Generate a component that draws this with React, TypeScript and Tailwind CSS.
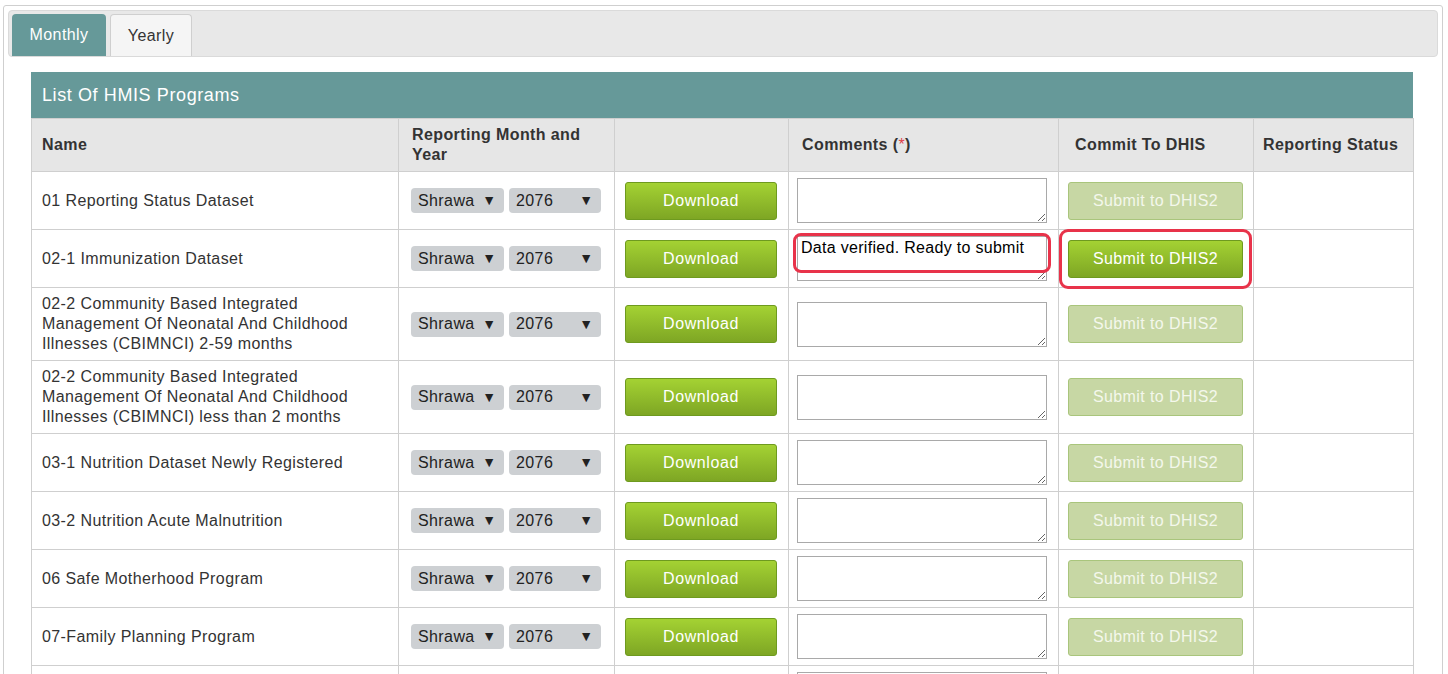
import React from 'react'

type Row = {
  name: string[]
  tall?: boolean
  highlighted?: boolean
}

const rows: Row[] = [
  { name: ['01 Reporting Status Dataset'] },
  { name: ['02-1 Immunization Dataset'], highlighted: true },
  {
    name: ['02-2 Community Based Integrated', 'Management Of Neonatal And Childhood', 'Illnesses (CBIMNCI) 2-59 months'],
    tall: true,
  },
  {
    name: ['02-2 Community Based Integrated', 'Management Of Neonatal And Childhood', 'Illnesses (CBIMNCI) less than 2 months'],
    tall: true,
  },
  { name: ['03-1 Nutrition Dataset Newly Registered'] },
  { name: ['03-2 Nutrition Acute Malnutrition'] },
  { name: ['06 Safe Motherhood Program'] },
  { name: ['07-Family Planning Program'] },
  { name: ['08 Safe Abortion Service'] },
]

function FakeSelect({ value, width }: { value: string; width: string }) {
  return (
    <div
      className={`${width} h-[25px] rounded-[4px] bg-[#cdd0d3] flex items-center justify-between pl-[7px] pr-[8px] text-[16px] text-[#222]`}
    >
      <span>{value}</span>
      <span className="text-[14px] tracking-normal">▼</span>
    </div>
  )
}

export default function App() {
  return (
    <div className="h-[674px] overflow-hidden bg-white pt-[5px] pl-[3px] pr-[5px] font-['Liberation_Sans',Arial,sans-serif] text-[16px] tracking-[0.4px] text-[#333]">
      <div className="border border-[#cfcfcf] rounded-[3px] pt-[4px] px-[4px] pb-[20px] min-h-[700px]">
        {/* Tabs */}
        <div className="h-[47px] bg-[#e8e8e8] border border-[#dadada] rounded-[4px] flex items-end pl-[3px] gap-[4px]">
          <div className="w-[94px] h-[42px] bg-[#669999] rounded-t-[4px] text-white flex items-center justify-center">
            Monthly
          </div>
          <div className="w-[82px] h-[42px] bg-[#f5f5f5] border border-[#cfcfcf] border-b-0 rounded-t-[4px] flex items-center justify-center">
            Yearly
          </div>
        </div>

        {/* Panel */}
        <div className="mt-[15px] ml-[23px] mr-[25px]">
          <div className="h-[46px] bg-[#669999] text-white text-[18px] tracking-[0.6px] flex items-center pl-[11px]">
            List Of HMIS Programs
          </div>
          <table className="w-full border-collapse table-fixed">
            <colgroup>
              <col className="w-[367px]" />
              <col className="w-[216px]" />
              <col className="w-[174px]" />
              <col className="w-[270px]" />
              <col className="w-[195px]" />
              <col className="w-[160px]" />
            </colgroup>
            <thead>
              <tr className="h-[53px] bg-[#e6e6e6] text-left">
                <th className="border border-[#cfcfcf] pl-[10px] font-bold">Name</th>
                <th className="border border-[#cfcfcf] pl-[13px] font-bold leading-[20px]">
                  Reporting Month and
                  <br />
                  Year
                </th>
                <th className="border border-[#cfcfcf]"></th>
                <th className="border border-[#cfcfcf] pl-[13px] font-bold">
                  Comments (<span className="text-[#e0404a] font-normal">*</span>)
                </th>
                <th className="border border-[#cfcfcf] pl-[16px] font-bold">Commit To DHIS</th>
                <th className="border border-[#cfcfcf] pl-[9px] font-bold">Reporting Status</th>
              </tr>
            </thead>
            <tbody>
              {rows.map((r, i) => (
                <tr key={i} className={r.tall ? 'h-[73px]' : 'h-[58px]'}>
                  <td className="border border-[#cfcfcf] pl-[10px] leading-[20px] align-middle">
                    {r.name.map((l, j) => (
                      <div key={j}>{l}</div>
                    ))}
                  </td>
                  <td className="border border-[#cfcfcf] pl-[12px]">
                    <div className="flex gap-[5px]">
                      <FakeSelect value="Shrawa" width="w-[93px]" />
                      <FakeSelect value="2076" width="w-[92px]" />
                    </div>
                  </td>
                  <td className="border border-[#cfcfcf] pl-[10px]">
                    <button className="w-[152px] h-[38px] rounded-[3px] border border-[#6e9a1f] bg-gradient-to-b from-[#a4d233] to-[#7ea624] text-white text-[16px] tracking-[0.6px]">
                      Download
                    </button>
                  </td>
                  <td className="border border-[#cfcfcf] pl-[8px] relative">
                    <textarea
                      readOnly
                      defaultValue={r.highlighted ? 'Data verified. Ready to submit' : ''}
                      className="block w-[250px] h-[45px] border border-[#a9a9a9] bg-white px-[3px] pt-[1px] text-[16px] leading-[20px] tracking-[0.3px] text-black font-['Liberation_Sans',Arial,sans-serif] resize-y outline-none"
                    />
                    {r.highlighted && (
                      <div className="absolute left-[4px] top-[3px] w-[258px] h-[40px] border-[3px] border-[#e8334a] rounded-[8px] pointer-events-none" />
                    )}
                  </td>
                  <td className="border border-[#cfcfcf] pl-[9px] relative">
                    {r.highlighted ? (
                      <button className="w-[175px] h-[38px] rounded-[3px] border border-[#6e9a1f] bg-gradient-to-b from-[#a4d233] to-[#7ea624] text-white text-[16px] tracking-[0.4px]">
                        Submit to DHIS2
                      </button>
                    ) : (
                      <button className="w-[175px] h-[38px] rounded-[3px] border border-[#a9c57c] bg-[#c7d7a4] text-[#f4f7ec] text-[16px] tracking-[0.4px]">
                        Submit to DHIS2
                      </button>
                    )}
                    {r.highlighted && (
                      <div className="absolute left-[0px] top-[-1px] w-[193px] h-[60px] border-[3px] border-[#e8334a] rounded-[9px] pointer-events-none" />
                    )}
                  </td>
                  <td className="border border-[#cfcfcf]"></td>
                </tr>
              ))}
            </tbody>
          </table>
        </div>
      </div>
    </div>
  )
}
